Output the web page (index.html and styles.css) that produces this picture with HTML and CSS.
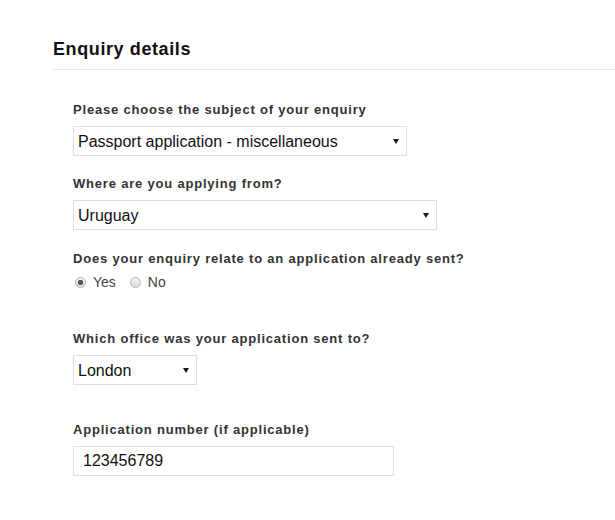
FILE: index.html
```html
<!DOCTYPE html>
<html lang="en">
<head>
<meta charset="utf-8">
<title>Enquiry details</title>
<link rel="stylesheet" href="styles.css">
</head>
<body>
<div class="page">
  <h2 class="heading">Enquiry details</h2>
  <form class="form">
    <div class="field field-subject">
      <label class="label" for="subject">Please choose the subject of your enquiry</label>
      <div class="select-wrap select-subject">
        <select id="subject" class="select">
          <option>Passport application - miscellaneous</option>
        </select>
      </div>
    </div>
    <div class="field field-country">
      <label class="label" for="country">Where are you applying from?</label>
      <div class="select-wrap select-country">
        <select id="country" class="select">
          <option>Uruguay</option>
        </select>
      </div>
    </div>
    <div class="field field-sent">
      <span class="label">Does your enquiry relate to an application already sent?</span>
      <div class="radios">
        <label class="radio-option"><input type="radio" name="sent" class="radio" checked><span>Yes</span></label>
        <label class="radio-option"><input type="radio" name="sent" class="radio"><span>No</span></label>
      </div>
    </div>
    <div class="field field-office">
      <label class="label" for="office">Which office was your application sent to?</label>
      <div class="select-wrap select-office">
        <select id="office" class="select">
          <option>London</option>
        </select>
      </div>
    </div>
    <div class="field field-number">
      <label class="label" for="number">Application number (if applicable)</label>
      <input id="number" class="text-input" type="text" value="123456789">
    </div>
  </form>
</div>
</body>
</html>
```
FILE: styles.css
```css
html, body {
  margin: 0;
  padding: 0;
  background: #ffffff;
}

body {
  font-family: "Liberation Sans", Arial, sans-serif;
  color: #333333;
}

.page {
  padding: 37px 0 0 53px;
}

.heading {
  margin: 0;
  font-size: 18px;
  line-height: 24px;
  font-weight: bold;
  letter-spacing: 0.6px;
  color: #111111;
  padding-bottom: 8px;
  border-bottom: 1px solid #e5e5e5;
}

.form {
  padding: 30px 0 0 20px;
  margin: 0;
}

.field-subject { margin-bottom: 18px; }
.field-country { margin-bottom: 19px; }
.field-sent { margin-bottom: 37px; }
.field-office { margin-bottom: 35px; }

.label {
  display: block;
  font-size: 13px;
  line-height: 20px;
  font-weight: bold;
  letter-spacing: 0.8px;
  color: #333333;
  margin-bottom: 6px;
}

.field-sent .label {
  margin-bottom: 3px;
}

.select-wrap {
  position: relative;
  display: block;
}

.select-wrap::after {
  content: "";
  position: absolute;
  right: 8px;
  top: 13px;
  width: 0;
  height: 0;
  border-left: 3px solid transparent;
  border-right: 3px solid transparent;
  border-top: 5px solid #1a1a1a;
  pointer-events: none;
}

.select-subject { width: 334px; }
.select-country { width: 364px; }
.select-office { width: 124px; }

.select {
  -webkit-appearance: none;
  appearance: none;
  display: block;
  width: 100%;
  height: 30px;
  margin: 0;
  padding: 0 20px 0 4px;
  border: 1px solid #dddddd;
  border-radius: 0;
  background: #ffffff;
  font-family: "Liberation Sans", Arial, sans-serif;
  font-size: 16px;
  color: #111111;
  box-sizing: border-box;
}

.radios {
  display: flex;
  align-items: center;
  gap: 14px;
  height: 20px;
  padding-left: 2px;
}

.radio-option {
  display: flex;
  align-items: center;
  font-size: 14px;
  line-height: 20px;
  color: #444444;
}

.radio {
  -webkit-appearance: none;
  appearance: none;
  width: 11px;
  height: 11px;
  margin: 0 7px 0 0;
  border: 1px solid #b4b4b4;
  border-radius: 50%;
  background: linear-gradient(#f4f4f4, #dcdcdc);
  box-sizing: border-box;
}

.radio:checked {
  background: radial-gradient(circle, #555555 0 2.4px, transparent 3px), linear-gradient(#f4f4f4, #dcdcdc);
}

.text-input {
  display: block;
  width: 321px;
  height: 30px;
  margin: 0;
  padding: 0 9px;
  border: 1px solid #dddddd;
  border-radius: 0;
  font-family: "Liberation Sans", Arial, sans-serif;
  font-size: 16px;
  color: #111111;
  box-sizing: border-box;
  outline: none;
}
```
